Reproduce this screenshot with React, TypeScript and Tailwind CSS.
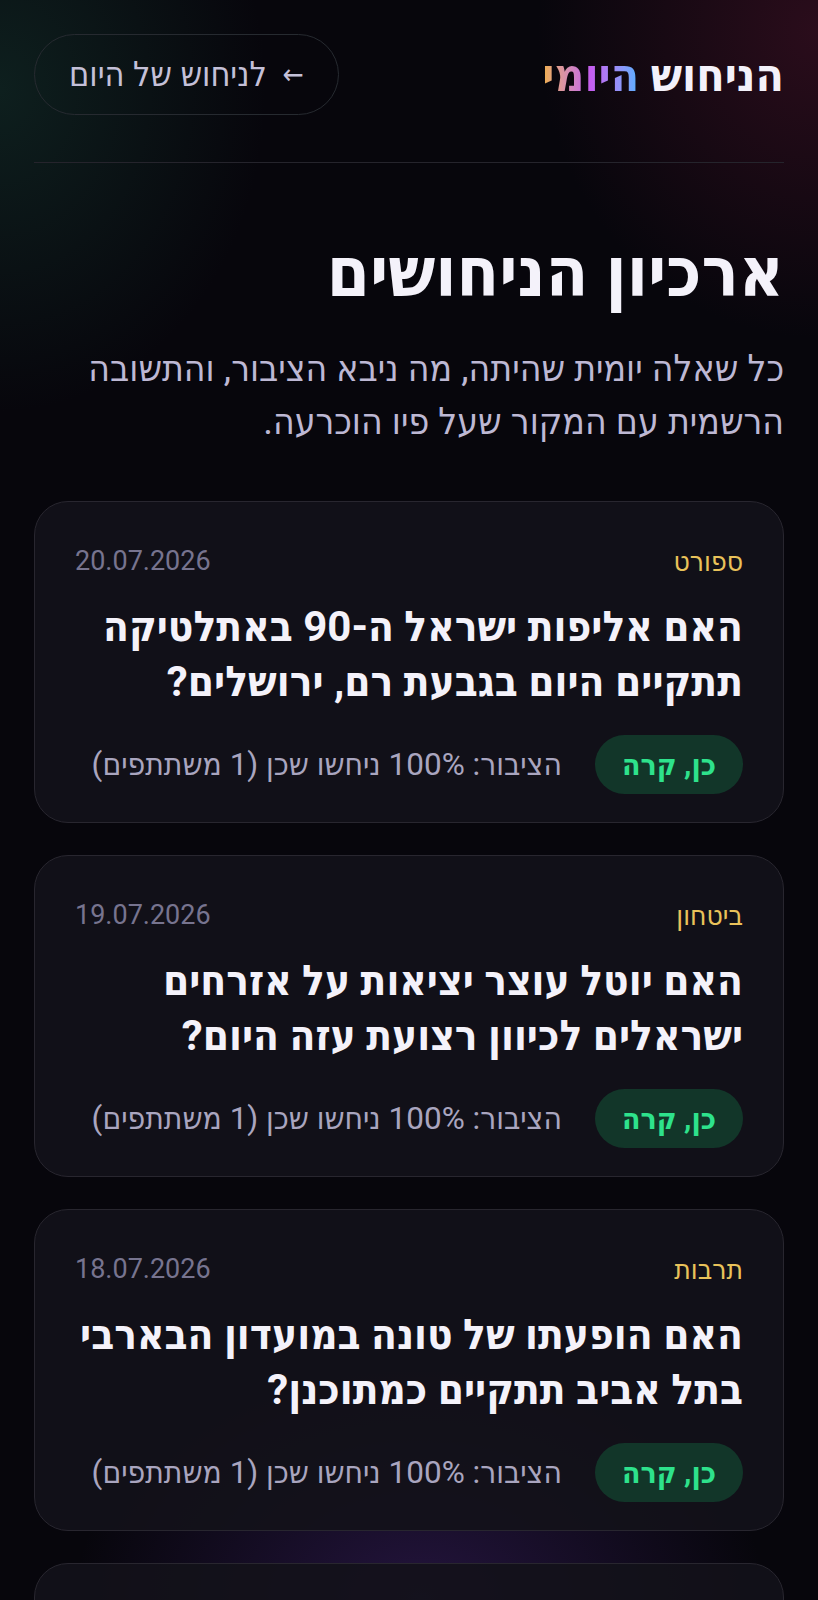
import React from "react";

type Item = {
  category: string;
  date: string;
  question: string;
  answer: string;
  stats: string;
};

const items: Item[] = [
  {
    category: "ספורט",
    date: "20.07.2026",
    question: "האם אליפות ישראל ה-90 באתלטיקה תתקיים היום בגבעת רם, ירושלים?",
    answer: "כן, קרה",
    stats: "הציבור: 100% ניחשו שכן (1 משתתפים)",
  },
  {
    category: "ביטחון",
    date: "19.07.2026",
    question: "האם יוטל עוצר יציאות על אזרחים ישראלים לכיוון רצועת עזה היום?",
    answer: "כן, קרה",
    stats: "הציבור: 100% ניחשו שכן (1 משתתפים)",
  },
  {
    category: "תרבות",
    date: "18.07.2026",
    question: "האם הופעתו של טונה במועדון הבארבי בתל אביב תתקיים כמתוכנן?",
    answer: "כן, קרה",
    stats: "הציבור: 100% ניחשו שכן (1 משתתפים)",
  },
  {
    category: "כלכלה",
    date: "17.07.2026",
    question: "האם בנק ישראל יותיר את הריבית ללא שינוי?",
    answer: "כן, קרה",
    stats: "הציבור: 100% ניחשו שכן (1 משתתפים)",
  },
];

function Card({ item }: { item: Item }) {
  return (
    <div className="rounded-[34px] border border-[#28262f] bg-[#131219]/90 px-[40px] pt-[43px] pb-[28px]">
      <div className="flex items-center justify-between leading-[33px]">
        <span className="text-[28px] text-[#e9c25a]">{item.category}</span>
        <span className="text-[27px] text-[#77748f]">{item.date}</span>
      </div>
      <h2 className="mt-[21px] text-[42px] font-bold leading-[55px] text-[#f4f2fa]">
        {item.question}
      </h2>
      <div className="mt-[26px] flex items-center gap-[33px]">
        <span className="flex h-[59px] shrink-0 items-center rounded-full bg-[#123629] px-[27px] text-[30px] font-bold text-[#2ee28c]">
          {item.answer}
        </span>
        <span className="whitespace-nowrap text-[31.5px] text-[#a9a5bf]">{item.stats}</span>
      </div>
    </div>
  );
}

export default function App() {
  return (
    <div
      dir="rtl"
      className="relative h-[1600px] overflow-hidden bg-[#07060c] font-['Roboto','DejaVu_Sans_Condensed',sans-serif]"
    >
      <div className="pointer-events-none absolute inset-0 bg-[radial-gradient(ellipse_380px_460px_at_0px_90px,rgba(22,62,52,0.45),transparent_70%)]" />
      <div className="pointer-events-none absolute inset-0 bg-[radial-gradient(ellipse_400px_440px_at_818px_30px,rgba(72,18,40,0.55),transparent_70%)]" />
      <div className="pointer-events-none absolute inset-0 bg-[radial-gradient(ellipse_460px_330px_at_420px_1600px,rgba(64,34,110,0.5),transparent_75%)]" />

      <div className="relative px-[34px] pt-[34px]">
        <header className="flex items-center justify-between">
          <div className="text-[46px] font-bold leading-none text-[#f3f1fa]">
            הניחוש{" "}
            <span className="bg-gradient-to-l from-[#4fb0ff] via-[#c45cf0] to-[#f0b040] bg-clip-text text-transparent">
              היומי
            </span>
          </div>
          <a className="flex h-[81px] items-center gap-[16px] rounded-full border border-[#262a30] px-[34px] text-[34px] text-[#c4c0d8]">
            <span className="text-[28px]">←</span>
            <span>לניחוש של היום</span>
          </a>
        </header>

        <div className="mt-[47px] h-px bg-[#25242c]" />

        <h1 className="mt-[73px] text-[69px] font-bold leading-[74px] text-[#f4f2fa]">
          ארכיון הניחושים
        </h1>
        <p className="mt-[32px] text-[37px] leading-[53px] text-[#bdb8d4]">
          כל שאלה יומית שהיתה, מה ניבא הציבור, והתשובה הרשמית עם המקור שעל פיו הוכרעה.
        </p>

        <div className="mt-[53px] flex flex-col gap-[32px]">
          {items.map((it) => (
            <Card key={it.date} item={it} />
          ))}
        </div>
      </div>
    </div>
  );
}
